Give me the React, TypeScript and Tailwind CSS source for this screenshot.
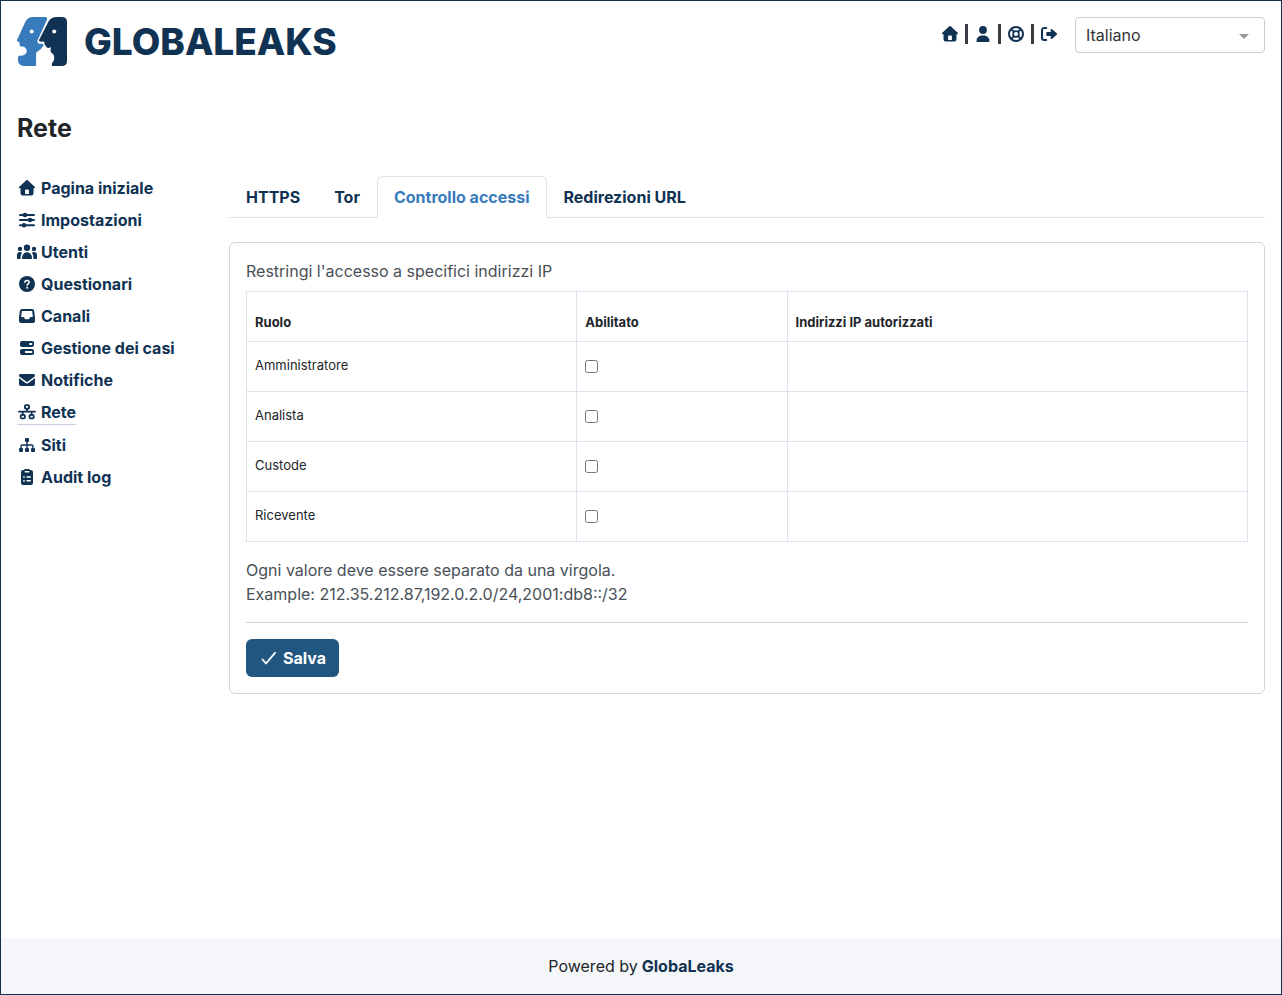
import React, { useState } from 'react';
import type { ReactNode } from 'react';

function Icon({ children, wide = false }: { children: ReactNode; wide?: boolean }) {
  return (
    <svg
      viewBox={wide ? '0 0 20 16' : '0 0 16 16'}
      className={wide ? 'h-4 w-5 shrink-0' : 'h-4 w-4 shrink-0'}
      fill="currentColor"
      aria-hidden="true"
    >
      {children}
    </svg>
  );
}

const HouseIcon = () => (
  <Icon>
    <path
      fillRule="evenodd"
      d="M7.3.3a1 1 0 0 1 1.4 0l7 6.500c.6.600.2 1.500-.6 1.500h-.6v5a2.200 2.200 0 0 1-2.200 2.200H3.700a2.200 2.200 0 0 1-2.200-2.200V8.300H.9C.1 8.300-.3 7.400.3 6.800zM7.300 9.500c-.7 0-1.200.5-1.200 1.200v3.300h3.800v-3.300c0-.7-.5-1.200-1.200-1.200z"
    />
  </Icon>
);

const UserIcon = () => (
  <Icon>
    <circle cx="8" cy="4" r="3.9" />
    <path d="M1.500 15.100c0-3.100 2.500-5.500 5.600-5.500h1.800c3.100 0 5.600 2.400 5.600 5.500 0 .5-.4.9-.9.9H2.400a.9.900 0 0 1-.9-.9z" />
  </Icon>
);

const LifeRingIcon = () => (
  <Icon>
    <g fill="none" stroke="currentColor">
      <circle cx="8" cy="8" r="7" strokeWidth="2" />
      <circle cx="8" cy="8" r="2.900" strokeWidth="1.700" />
      <path d="M2.900 2.900l3 3M13.100 2.900l-3 3M2.900 13.100l3-3M13.100 13.100l-3-3" strokeWidth="2" />
    </g>
  </Icon>
);

const LogoutIcon = () => (
  <Icon>
    <path
      d="M5.200 2H3.200A2.200 2.200 0 0 0 1 4.200v7.600A2.200 2.200 0 0 0 3.200 14h2"
      fill="none"
      stroke="currentColor"
      strokeWidth="2"
      strokeLinecap="round"
    />
    <path d="M15.700 8.700l-4.500 4.100c-.6.600-1.500.2-1.500-.6V10H6.300a1 1 0 0 1-1-1V7a1 1 0 0 1 1-1h3.400V3.800c0-.8.9-1.200 1.500-.6l4.500 4.100a1 1 0 0 1 0 1.400z" />
  </Icon>
);

const SlidersIcon = () => (
  <Icon>
    <path
      d="M1 3h14M1 8h14M1 13.200h14"
      stroke="currentColor"
      strokeWidth="2"
      strokeLinecap="round"
    />
    <circle cx="6" cy="3" r="2.300" />
    <circle cx="11" cy="8" r="2.300" />
    <circle cx="5" cy="13.200" r="2.300" />
  </Icon>
);

const UsersIcon = () => (
  <Icon wide>
    <circle cx="10" cy="3.700" r="3.200" />
    <circle cx="3" cy="4.900" r="2.200" />
    <circle cx="17" cy="4.900" r="2.200" />
    <path d="M5 14.200C5 10.800 7.200 8.300 10 8.300s5 2.500 5 5.900c0 .5-.3.800-.8.800H5.800c-.5 0-.8-.3-.8-.8z" />
    <path d="M0 14.200v-2.900A3.200 3.200 0 0 1 3.200 8.100c.7 0 1.300.2 1.800.6-1 1.500-1.600 3.300-1.400 6.300H.8c-.5 0-.8-.3-.8-.8zM20 14.200v-2.900a3.200 3.200 0 0 0-3.200-3.200c-.7 0-1.300.2-1.800.6 1 1.500 1.600 3.300 1.400 6.300h2.800c.5 0 .8-.3.8-.8z" />
  </Icon>
);

const QuestionIcon = () => (
  <Icon>
    <circle cx="8" cy="8" r="8" />
    <path
      d="M5.900 6.300C5.900 5 6.800 4.500 8 4.500s2.200.7 2.200 1.800c0 1.500-2.100 1.500-2.100 3"
      fill="none"
      stroke="#fff"
      strokeWidth="1.500"
      strokeLinecap="round"
    />
    <circle cx="8.100" cy="11.700" r="1" fill="#fff" />
  </Icon>
);

const InboxIcon = () => (
  <Icon>
    <path
      fillRule="evenodd"
      d="M2.900 1h10.200a2 2 0 0 1 2 1.700l.9 6.500V13a2 2 0 0 1-2 2H2a2 2 0 0 1-2-2V9.200l.9-6.500A2 2 0 0 1 2.900 1zM2.900 3 2.100 9h2.100c.4 0 .7.200.9.500l.6 1.200c.2.300.5.500.9.500h2.800c.4 0 .7-.2.900-.5l.6-1.200c.2-.3.500-.5.900-.5h2.100l-.8-6z"
    />
  </Icon>
);

const CasesIcon = () => (
  <Icon>
    <path
      fillRule="evenodd"
      d="M3 1h10a2 2 0 0 1 2 2v2a2 2 0 0 1-2 2H3a2 2 0 0 1-2-2V3a2 2 0 0 1 2-2zm7.300 2v2h2.900V3zM3 9h10a2 2 0 0 1 2 2v2a2 2 0 0 1-2 2H3a2 2 0 0 1-2-2v-2a2 2 0 0 1 2-2zm3 2v2h7.200v-2z"
    />
  </Icon>
);

const EnvelopeIcon = () => (
  <Icon>
    <path d="M1.500 2h13A1.500 1.500 0 0 1 16 3.500c0 .5-.2.900-.6 1.200L8.900 9.600c-.5.400-1.300.4-1.800 0L.6 4.700A1.500 1.500 0 0 1 1.500 2z" />
    <path d="M0 6.100l6.200 4.700c1.100.8 2.500.8 3.600 0L16 6.100V12a2 2 0 0 1-2 2H2a2 2 0 0 1-2-2z" />
  </Icon>
);

const NetworkIcon = () => (
  <Icon wide>
    <g fill="none" stroke="currentColor" strokeWidth="1.800">
      <rect x="7.900" y="1.200" width="4.200" height="3.500" rx="1" />
      <rect x="3.700" y="10.800" width="4.200" height="3.500" rx="1" />
      <rect x="12.500" y="10.800" width="4.200" height="3.500" rx="1" />
      <path d="M2 7.700h16M10 4.700v3M5.800 7.700v3.100M14.600 7.700v3.100" strokeLinecap="round" />
    </g>
  </Icon>
);

const SitemapIcon = () => (
  <Icon>
    <rect x="6" y="1" width="4" height="4" rx="1" />
    <rect x="0" y="11" width="4" height="4" rx="1" />
    <rect x="6" y="11" width="4" height="4" rx="1" />
    <rect x="12" y="11" width="4" height="4" rx="1" />
    <path
      d="M8 5v6M2 11V9.300C2 8.600 2.600 8 3.300 8h9.400c.7 0 1.300.6 1.300 1.300V11"
      fill="none"
      stroke="currentColor"
      strokeWidth="1.400"
    />
  </Icon>
);

const ClipboardIcon = () => (
  <Icon>
    <path d="M4.800 1.100C5.200.400 5.900 0 6.600 0h2.800c.7 0 1.400.400 1.800 1.100H12a2 2 0 0 1 2 2V14a2 2 0 0 1-2 2H4a2 2 0 0 1-2-2V3.100a2 2 0 0 1 2-2z" />
    <g fill="none" stroke="#fff" strokeWidth="1.400" strokeLinecap="round">
      <path d="M6.300 2.700h3.400M8 8h3.300M8 11.800h3.300" />
      <path d="M4.900 8h.2M4.900 11.800h.2" strokeWidth="1.700" />
    </g>
  </Icon>
);

function Logo() {
  return (
    <svg viewBox="0 0 322 50" className="h-[50px] w-[322px]" role="img" aria-label="GlobaLeaks">
      <path
        fill="#377bbc"
        d="M16.500 0H28c1.800 0 2.500 1.200 2 2.800l-9.400 20.400c-.6 1.600.1 3.300 1.600 3.500l3.600.1.900 2.100c-1.500.6-1.900 1.800-2.600 2.800-1 1.400-4.200 2.200-5 4.500V49H7.500C3.500 49 1 46.500 1 43l.1-3.500 1.400-1c2.300.6 4 .1 5.600-1.200 1.500-1.200 1.800-2.600 1.400-4.200-.5-2.100-2-3.500-4.200-3.600-1.500 0-2.500-.4-2.700-1.500l-.2-3L0 24.300c-.4-.7.100-1.500.5-2.300L8 5.500C10 1.500 12.500 0 16.500 0z"
      />
      <path
        fill="#103253"
        d="M40 0h5c3.200 0 5 1.700 5 5v39c0 3.300-1.800 5-5 5H34.900v-2.500c.7-1.500 2-2.200 2.300-4.200.2-2-.1-3.600-.8-4.900-.9-1.300-2.500-1.600-2.800-3.200-.3-1.400.6-2.800.2-4.200-1.500 1-2.600 1.300-4 .5l-2.300-3.200-.3-2.600-4.500-.2c-.9-.4-.7-1.300-.3-2.200L31.500 4.500C33.300 1.200 36 0 40 0z"
      />
      <circle cx="14.700" cy="14.400" r="2" fill="#fff" />
      <circle cx="37.200" cy="14.400" r="2" fill="#fff" />
      <text x="67" y="38" fill="#103253" fontSize="37" fontWeight="800" fontFamily="Inter, sans-serif">
        GLOBALEAKS
      </text>
    </svg>
  );
}

const navItems = [
  { label: 'Pagina iniziale', icon: HouseIcon },
  { label: 'Impostazioni', icon: SlidersIcon },
  { label: 'Utenti', icon: UsersIcon },
  { label: 'Questionari', icon: QuestionIcon },
  { label: 'Canali', icon: InboxIcon },
  { label: 'Gestione dei casi', icon: CasesIcon },
  { label: 'Notifiche', icon: EnvelopeIcon },
  { label: 'Rete', icon: NetworkIcon },
  { label: 'Siti', icon: SitemapIcon },
  { label: 'Audit log', icon: ClipboardIcon },
];

const headerLinks = [
  { label: 'Pagina iniziale', icon: HouseIcon },
  { label: 'Preferenze', icon: UserIcon },
  { label: 'Supporto', icon: LifeRingIcon },
  { label: 'Esci', icon: LogoutIcon },
];

const tabs = ['HTTPS', 'Tor', 'Controllo accessi', 'Redirezioni URL'];
const roles = ['Amministratore', 'Analista', 'Custode', 'Ricevente'];

function Header() {
  return (
    <header className="flex items-start justify-between">
      <a href="#home">
        <Logo />
      </a>
      <div className="flex items-start gap-[18px]">
        <nav className="flex h-[34px] items-center text-[#103253]">
          {headerLinks.map(({ label, icon: LinkIcon }, i) => (
            <React.Fragment key={label}>
              {i > 0 && <span className="mx-[7px] h-5 w-[3px] bg-[#3a3d44]" />}
              <a href="#" aria-label={label}>
                <LinkIcon />
              </a>
            </React.Fragment>
          ))}
        </nav>
        <div className="relative">
          <select
            aria-label="Lingua"
            className="h-9 w-[190px] appearance-none rounded border border-[#cccccc] bg-white px-[10px] text-base text-[#333333]"
          >
            <option>Italiano</option>
            <option>English</option>
          </select>
          <span className="pointer-events-none absolute right-4 top-[17px] border-x-[5px] border-t-[5px] border-x-transparent border-t-[#999999]" />
        </div>
      </div>
    </header>
  );
}

function Sidebar() {
  return (
    <nav className="w-[196px] shrink-0 pt-1">
      <ul className="flex flex-col items-start gap-2 font-bold text-[#103253]">
        {navItems.map(({ label, icon: NavIcon }) => (
          <li key={label} className={label === 'Rete' ? 'border-b border-[#c5cfe0]' : ''}>
            <a href="#" className="flex h-6 items-center gap-1">
              <span className="flex w-5 justify-center">
                <NavIcon />
              </span>
              {label}
            </a>
          </li>
        ))}
      </ul>
    </nav>
  );
}

function AccessControl() {
  const [enabled, setEnabled] = useState<Record<string, boolean>>({});

  return (
    <section className="mt-6 rounded-md border border-[#d3d5d9] p-4 text-[#495057]">
      <p>Restringi l'accesso a specifici indirizzi IP</p>
      <table className="mt-2 w-full table-fixed border-collapse text-left text-[13px] text-[#212529]">
        <thead>
          <tr className="h-[50px]">
            <th className="w-[33%] border border-[#dbe1ed] px-2 pb-[9px] align-bottom">Ruolo</th>
            <th className="w-[21%] border border-[#dbe1ed] px-2 pb-[9px] align-bottom">Abilitato</th>
            <th className="border border-[#dbe1ed] px-2 pb-[9px] align-bottom">Indirizzi IP autorizzati</th>
          </tr>
        </thead>
        <tbody>
          {roles.map((role) => (
            <tr key={role} className="h-[50px]">
              <td className="border border-[#dbe1ed] px-2 pb-[2px]">
                <label htmlFor={role}>{role}</label>
              </td>
              <td className="border border-[#dbe1ed] px-2">
                <input
                  id={role}
                  type="checkbox"
                  className="block h-[13px] w-[13px]"
                  checked={!!enabled[role]}
                  onChange={(e) => setEnabled({ ...enabled, [role]: e.target.checked })}
                />
              </td>
              <td className="border border-[#dbe1ed] px-2" />
            </tr>
          ))}
        </tbody>
      </table>
      <p className="mt-4">
        Ogni valore deve essere separato da una virgola.
        <br />
        Example: 212.35.212.87,192.0.2.0/24,2001:db8::/32
      </p>
      <hr className="my-4 border-[#d1d3d5]" />
      <button type="button" className="flex h-[38px] items-center gap-[6px] rounded-md bg-[#20567f] px-[13px] font-bold text-white">
        <svg viewBox="0 0 18 16" className="h-4 w-[18px]" fill="none" stroke="currentColor" strokeWidth="1.800" strokeLinecap="round" strokeLinejoin="round" aria-hidden="true">
          <path d="M3.500 9.500 7 13.500 16 2.800" />
        </svg>
        Salva
      </button>
    </section>
  );
}

export default function App() {
  const [tab, setTab] = useState('Controllo accessi');

  return (
    <div className="flex min-h-screen flex-col border border-[#103253] bg-white font-['Inter',sans-serif] text-base text-[#212529]">
      <div className="grow p-4">
        <Header />
        <h1 className="mt-[45px] text-[25px] leading-8 font-bold">Rete</h1>

        <div className="mt-7 flex gap-4">
          <Sidebar />
          <main className="min-w-0 grow pt-1">
            <div role="tablist" className="flex border-b border-[#dbe1ed]">
              {tabs.map((name) => (
                <button
                  key={name}
                  type="button"
                  role="tab"
                  aria-selected={tab === name}
                  onClick={() => setTab(name)}
                  className={
                    tab === name
                      ? '-mb-px h-[42px] rounded-t-md border border-[#dbe1ed] border-b-white bg-white px-4 font-bold text-[#377bbc]'
                      : '-mb-px h-[42px] border border-transparent px-4 font-bold text-[#103253]'
                  }
                >
                  {name}
                </button>
              ))}
            </div>
            <AccessControl />
          </main>
        </div>
      </div>

      <footer className="flex h-14 items-center justify-center gap-1 bg-[#f5f6fa]">
        Powered by
        <a href="#" className="font-bold text-[#103253]">
          GlobaLeaks
        </a>
      </footer>
    </div>
  );
}
